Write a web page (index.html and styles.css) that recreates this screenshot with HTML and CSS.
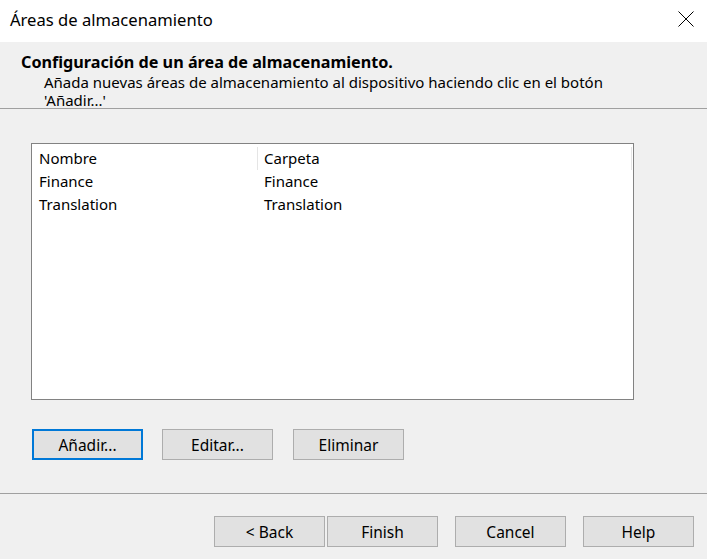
FILE: index.html
```html
<!DOCTYPE html>
<html>
<head>
	<meta charset="utf-8">
	<meta name="viewport" content="width=device-width, initial-scale=1">
	<link rel="stylesheet" href="styles.css">
</head>
<body>
<div class="dialog">
   <div class="titlebar">
      <span class="title">Áreas de almacenamiento</span>
      <svg class="close" width="16" height="16" viewBox="0 0 16 16">
         <path d="M0.5 0.5 L15.5 15.5 M15.5 0.5 L0.5 15.5" stroke="#000" stroke-width="1" fill="none"/>
      </svg>
   </div>
   <div class="header">
      <h3>Configuración de un área de almacenamiento.</h3>
      <p>Añada nuevas áreas de almacenamiento al dispositivo haciendo clic en el botón 'Añadir...'</p>
   </div>
   <div class="content">
      <div class="listbox">
         <div class="row head">
            <span class="col name">Nombre</span>
            <span class="col folder">Carpeta</span>
            <span class="col rest"></span>
         </div>
         <div class="row">
            <span class="col name">Finance</span>
            <span class="col folder">Finance</span>
         </div>
         <div class="row">
            <span class="col name">Translation</span>
            <span class="col folder">Translation</span>
         </div>
      </div>
      <div class="actions">
         <button class="focused">Añadir...</button>
         <button>Editar...</button>
         <button>Eliminar</button>
      </div>
   </div>
   <div class="footer">
      <button>&lt; Back</button>
      <button class="finish">Finish</button>
      <button class="cancel">Cancel</button>
      <button class="help">Help</button>
   </div>
</div>
</body>
</html>
```

FILE: styles.css
```css
body {
   margin: 0;
   background: #f0f0f0;
   font-family: "Noto Sans", "Open Sans", sans-serif;
   font-size: 15px;
   color: #000;
}

.dialog {
   width: 707px;
   height: 559px;
   overflow: hidden;
}

.titlebar {
   height: 42px;
   background: #fff;
   display: flex;
   align-items: center;
   justify-content: space-between;
   padding: 0 13px 0 10px;
   box-sizing: border-box;
}

.title {
   font-size: 16.6px;
   margin-top: -3px;
}

.close {
   margin-top: -4px;
}

.header {
   height: 67px;
   box-sizing: border-box;
   border-bottom: 1px solid #a0a0a0;
   padding: 10px 0 0 21px;
}

.header h3 {
   margin: 0;
   font-size: 16.2px;
   line-height: 20px;
   font-weight: bold;
}

.header p {
   margin: 1px 0 0;
   padding: 0 90px 0 23px;
   line-height: 18px;
}

.content {
   padding: 34px 0 0 31px;
   height: 385px;
   box-sizing: border-box;
   border-bottom: 1px solid #a0a0a0;
}

.listbox {
   width: 603px;
   height: 257px;
   box-sizing: border-box;
   border: 1px solid #828282;
   background: #fff;
   padding-top: 3px;
}

.row {
   display: flex;
   height: 23px;
   line-height: 23px;
}

.col {
   box-sizing: border-box;
   white-space: nowrap;
}

.col.name {
   width: 226px;
   padding-left: 7px;
}

.col.folder {
   width: 374px;
   padding-left: 6px;
}

.head .col.name,
.head .col.folder {
   border-right: 1px solid #e5e5e5;
}

.actions {
   display: flex;
   gap: 19px;
   margin-top: 29px;
   padding-left: 1px;
}

button {
   width: 111px;
   height: 31px;
   background: #e1e1e1;
   border: 1px solid #adadad;
   font-family: inherit;
   font-size: 15.5px;
   color: #000;
   padding: 0;
}

button.focused {
   border: 2px solid #0078d7;
}

.actions button:nth-child(3) {
   margin-left: 1px;
}

.footer {
   display: flex;
   padding: 22px 0 0 214px;
}

.footer .finish {
   margin-left: 2px;
}

.footer .cancel,
.footer .help {
   margin-left: 17px;
}
```
